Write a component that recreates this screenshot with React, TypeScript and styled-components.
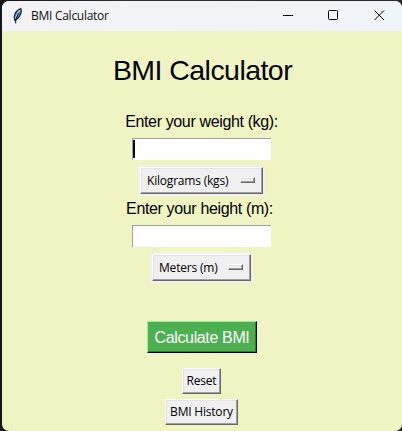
import React from "react";
import styled, { createGlobalStyle } from "styled-components";

const Global = createGlobalStyle`
  * { box-sizing: border-box; }
  html, body, #root { height: 100%; }
  body { margin: 0; background: #17181a; overflow: hidden; }
`;

const Desktop = styled.div`
  height: 431px;
  padding: 1px 0 0 2px;
  background: linear-gradient(90deg, #141617, #332f34 30%, #2b292d);
`;

const Window = styled.main`
  display: flex;
  flex-direction: column;
  width: 400px;
  height: 430px;
  border-radius: 7px;
  overflow: hidden;
  background: #f0f4c3;
`;

const TitleBar = styled.header`
  display: flex;
  align-items: center;
  flex: none;
  height: 30px;
  padding-left: 9px;
  background: linear-gradient(90deg, #f3f3f5, #eff4f8);
`;

const WindowName = styled.span`
  flex: 1;
  margin-left: 7px;
  font: 12px/16px "Open Sans", "Noto Sans", sans-serif;
  letter-spacing: -0.27px;
  color: #111;
  white-space: nowrap;
`;

const Control = styled.button`
  display: grid;
  place-items: center;
  width: 45.5px;
  height: 30px;
  padding: 0 0 2px;
  border: 0;
  background: none;
`;

const Body = styled.section`
  display: flex;
  flex-direction: column;
  align-items: center;
  padding-right: 1px;
`;

const Heading = styled.h1`
  margin: 20px 0 24px;
  padding-left: 2px;
  font: 400 28.5px/38px "Liberation Sans", Arial, sans-serif;
  letter-spacing: -0.55px;
  color: #000;
  white-space: nowrap;
`;

const Label = styled.label<{ $height: number; $top?: number; $right?: number }>`
  height: ${(p) => p.$height}px;
  padding-top: ${(p) => p.$top ?? 0}px;
  padding-right: ${(p) => p.$right ?? 0}px;
  font: 16px/18px "Liberation Sans", Arial, sans-serif;
  letter-spacing: -0.36px;
  color: #000;
  white-space: nowrap;
`;

const Entry = styled.div`
  width: 139px;
  height: 22px;
  padding: 1px 0;
  border: solid #a0a0a0;
  border-width: 1px 0 0 1px;
  background: #fff;
`;

const Caret = styled.div`
  width: 2px;
  height: 18px;
  background: #000;
`;

const Raised = styled.button<{ $width: number; $height: number; $top?: number }>`
  display: flex;
  align-items: center;
  justify-content: center;
  width: ${(p) => p.$width}px;
  height: ${(p) => p.$height}px;
  margin: ${(p) => p.$top ?? 0}px 0 0;
  padding: 0;
  border: 1px solid;
  border-color: #fff #696969 #696969 #fff;
  box-shadow: inset -1px -1px #a0a0a0, inset 1px 1px #e3e3e3;
  background: #f0f0f0;
  font: 12px/16px "Open Sans", "Noto Sans", sans-serif;
  letter-spacing: -0.2px;
  color: #000;
  white-space: nowrap;
`;

const MenuFrame = styled.div<{ $top: number }>`
  margin-top: ${(p) => p.$top}px;
  padding: 2px;
  background: #f0f0f0;
`;

const MenuButton = styled(Raised)`
  justify-content: space-between;
  padding: 0 7px 0 6px;
`;

const Indicator = styled.span`
  width: 15px;
  height: 6px;
  margin-bottom: 1px;
  border: 1px solid;
  border-color: #fff #696969 #696969 #fff;
  box-shadow: inset -1px -1px #a0a0a0, inset 1px 1px #e3e3e3;
`;

const Calculate = styled(Raised)`
  padding: 2px 0 0 1px;
  border-color: #93f397 #000 #000 #93f397;
  box-shadow: inset -1px -1px #2f7932;
  background: #4caf50;
  font: 16px/18px "Liberation Sans", Arial, sans-serif;
  letter-spacing: -0.36px;
  color: #fff;
`;

const Feather = () => (
  <svg width="13" height="18" viewBox="0 0 13 18">
    <path d="M3.8 13.5C2 9.5 4 3.5 9.8 1.5C11.5 5 8.5 11 5 13Z" fill="#4c8bd0" stroke="#17212d" strokeWidth="1.1" />
    <path d="M9 3C7 5.5 5 9 4.7 12" fill="none" stroke="#b6dcfa" strokeWidth="1.2" />
    <path d="M7.5 6L4.7 12.5V16.5" fill="none" stroke="#111" />
  </svg>
);

export default function App() {
  return (
    <>
      <Global />
      <Desktop>
        <Window>
          <TitleBar>
            <Feather />
            <WindowName>BMI Calculator</WindowName>
            <Control aria-label="Minimize">
              <svg width="11" height="11"><path d="M0 5.5H10" stroke="#000" /></svg>
            </Control>
            <Control aria-label="Maximize">
              <svg width="11" height="11"><rect x=".5" y=".5" width="9" height="9" rx="1" fill="none" stroke="#000" /></svg>
            </Control>
            <Control aria-label="Close">
              <svg width="11" height="11"><path d="M.5 .5L10 10M10 .5L.5 10" stroke="#000" /></svg>
            </Control>
          </TitleBar>
          <Body>
            <Heading>BMI Calculator</Heading>
            <Label $height={25}>Enter your weight (kg):</Label>
            <Entry><Caret /></Entry>
            <MenuFrame $top={5}>
              <MenuButton $width={123} $height={27}>Kilograms (kgs)<Indicator /></MenuButton>
            </MenuFrame>
            <Label $height={29} $top={4} $right={4}>Enter your height (m):</Label>
            <Entry />
            <MenuFrame $top={5}>
              <MenuButton $width={99} $height={27}>Meters (m)<Indicator /></MenuButton>
            </MenuFrame>
            <Calculate $width={110} $height={32} $top={38}>Calculate BMI</Calculate>
            <Raised $width={39} $height={26} $top={15}>Reset</Raised>
            <Raised $width={73} $height={26} $top={5}>BMI History</Raised>
          </Body>
        </Window>
      </Desktop>
    </>
  );
}
